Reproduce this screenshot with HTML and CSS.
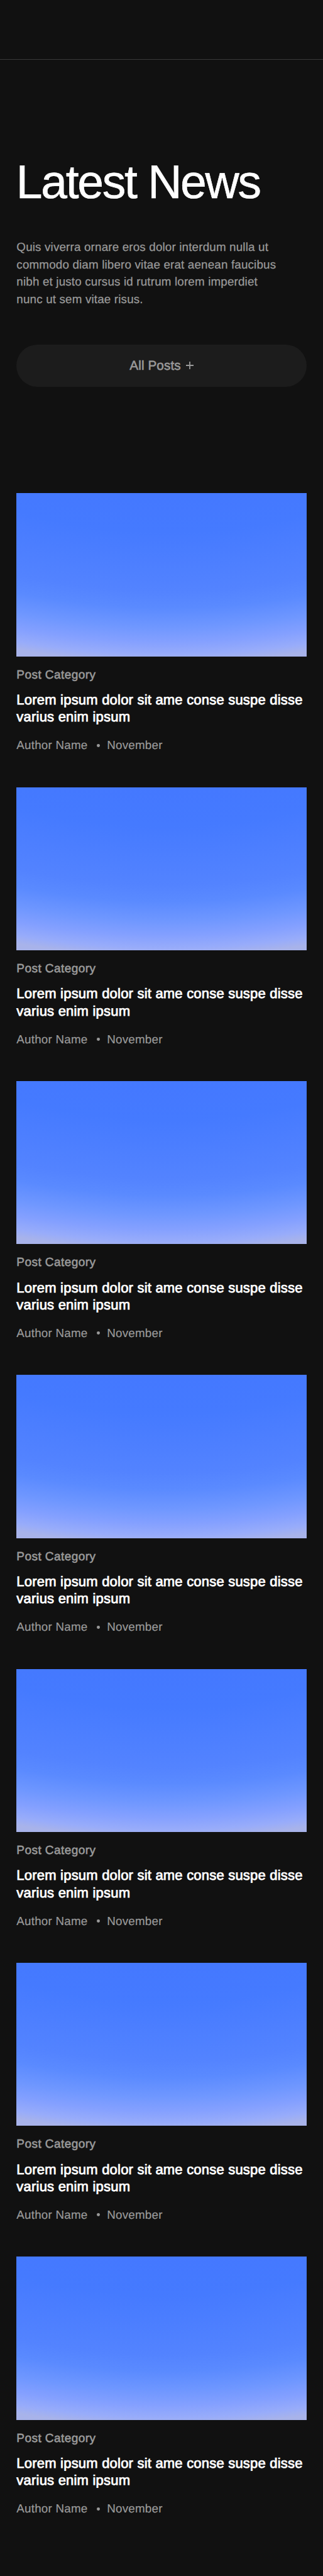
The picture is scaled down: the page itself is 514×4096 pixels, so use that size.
FILE: index.html
```html
<!DOCTYPE html>
<html lang="en">
<head>
<meta charset="utf-8">
<title>Latest News</title>
<link rel="stylesheet" href="styles.css">
</head>
<body>
<header class="topbar"></header>
<main class="page">
  <section class="hero">
    <h1 class="hero-title">Latest News</h1>
    <p class="hero-text">Quis viverra ornare eros dolor interdum nulla ut<br>commodo diam libero vitae erat aenean faucibus<br>nibh et justo cursus id rutrum lorem imperdiet<br>nunc ut sem vitae risus.</p>
    <a class="all-posts"><span class="all-posts-label">All Posts</span><svg class="plus" viewBox="0 0 12 12"><path d="M6 0v12M0 6h12" stroke="currentColor" stroke-width="1.8" fill="none"/></svg></a>
  </section>
  <section class="posts">
    <article class="post">
      <div class="cover"></div>
      <p class="category">Post Category</p>
      <h2 class="title">Lorem ipsum dolor sit ame conse suspe disse<br>varius enim ipsum</h2>
      <div class="meta"><span>Author Name</span><i class="dot"></i><span>November</span></div>
    </article>
    <article class="post">
      <div class="cover"></div>
      <p class="category">Post Category</p>
      <h2 class="title">Lorem ipsum dolor sit ame conse suspe disse<br>varius enim ipsum</h2>
      <div class="meta"><span>Author Name</span><i class="dot"></i><span>November</span></div>
    </article>
    <article class="post">
      <div class="cover"></div>
      <p class="category">Post Category</p>
      <h2 class="title">Lorem ipsum dolor sit ame conse suspe disse<br>varius enim ipsum</h2>
      <div class="meta"><span>Author Name</span><i class="dot"></i><span>November</span></div>
    </article>
    <article class="post">
      <div class="cover"></div>
      <p class="category">Post Category</p>
      <h2 class="title">Lorem ipsum dolor sit ame conse suspe disse<br>varius enim ipsum</h2>
      <div class="meta"><span>Author Name</span><i class="dot"></i><span>November</span></div>
    </article>
    <article class="post">
      <div class="cover"></div>
      <p class="category">Post Category</p>
      <h2 class="title">Lorem ipsum dolor sit ame conse suspe disse<br>varius enim ipsum</h2>
      <div class="meta"><span>Author Name</span><i class="dot"></i><span>November</span></div>
    </article>
    <article class="post">
      <div class="cover"></div>
      <p class="category">Post Category</p>
      <h2 class="title">Lorem ipsum dolor sit ame conse suspe disse<br>varius enim ipsum</h2>
      <div class="meta"><span>Author Name</span><i class="dot"></i><span>November</span></div>
    </article>
    <article class="post">
      <div class="cover"></div>
      <p class="category">Post Category</p>
      <h2 class="title">Lorem ipsum dolor sit ame conse suspe disse<br>varius enim ipsum</h2>
      <div class="meta"><span>Author Name</span><i class="dot"></i><span>November</span></div>
    </article>
  </section>
</main>
</body>
</html>
```
FILE: styles.css
```css
* { box-sizing: border-box; margin: 0; padding: 0; }

body {
  min-height: 4096px;
  background: #111111;
  color: #999999;
  font-family: "Liberation Sans", Arial, sans-serif;
  text-rendering: geometricPrecision;
  white-space: nowrap;
}

.topbar { height: 95px; border-bottom: 1px solid #3a3a3a; }

.page { padding: 154px 26.36px 0; }

.hero-title {
  margin-left: -0.6px;
  font-size: 75px;
  line-height: 80px;
  font-weight: 400;
  letter-spacing: -2.25px;
  color: #ffffff;
  -webkit-text-stroke: 0.6px currentColor;
}

.hero-text {
  margin-top: 50px;
  font-size: 18.8px;
  line-height: 27.66px;
  letter-spacing: 0.17px;
  -webkit-text-stroke: 0.25px currentColor;
}

.all-posts {
  display: flex;
  align-items: center;
  justify-content: center;
  gap: 8px;
  height: 67.5px;
  margin-top: 58.1px;
  border-radius: 34px;
  background: #1c1c1c;
  font-size: 20.7px;
  letter-spacing: 0.1px;
  -webkit-text-stroke: 0.6px currentColor;
}

.all-posts-label { padding-top: 1.6px; }

.plus { width: 12px; height: 12px; }

.posts {
  display: flex;
  flex-direction: column;
  gap: 54.47px;
  margin-top: 169.1px;
}

.post { height: 412.86px; }

.cover {
  height: 259.3px;
  background: radial-gradient(189% 200% at 52% -100%,
    #4478ff 50%, #457aff 62%, #4d7fff 72%, #5383ff 80%, #5a8aff 85%,
    #6f97ff 91%, #84a0ff 95.5%, #98acfa 99.3%, #a8b3ea 101.7%);
}

.category {
  margin-top: 18.2px;
  font-size: 19px;
  line-height: 24px;
  letter-spacing: 0.43px;
  -webkit-text-stroke: 0.6px currentColor;
}

.title {
  margin-top: 13.1px;
  font-size: 22px;
  line-height: 27.5px;
  font-weight: 400;
  letter-spacing: 0.21px;
  color: #ffffff;
  -webkit-text-stroke: 0.8px currentColor;
}

.meta {
  display: flex;
  align-items: center;
  margin-top: 19.3px;
  font-size: 18.8px;
  line-height: 24px;
  letter-spacing: 0.22px;
  -webkit-text-stroke: 0.2px currentColor;
}

.dot {
  width: 4.8px;
  height: 4.8px;
  margin: 0 11px 0 15px;
  border-radius: 50%;
  background: currentColor;
}
```
